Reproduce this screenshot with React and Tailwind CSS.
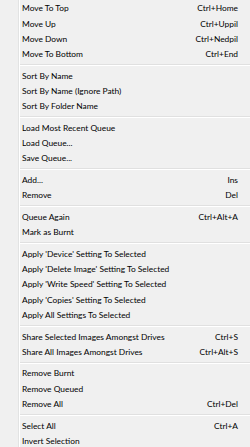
const groups = [
  [
    ['Move To Top', 'Ctrl+Home'],
    ['Move Up', 'Ctrl+Uppil'],
    ['Move Down', 'Ctrl+Nedpil'],
    ['Move To Bottom', 'Ctrl+End'],
  ],
  [
    ['Sort By Name'],
    ['Sort By Name (Ignore Path)'],
    ['Sort By Folder Name'],
  ],
  [
    ['Load Most Recent Queue'],
    ['Load Queue...'],
    ['Save Queue...'],
  ],
  [
    ['Add...', 'Ins'],
    ['Remove', 'Del'],
  ],
  [
    ['Queue Again', 'Ctrl+Alt+A'],
    ['Mark as Burnt'],
  ],
  [
    ["Apply 'Device' Setting To Selected"],
    ["Apply 'Delete Image' Setting To Selected"],
    ["Apply 'Write Speed' Setting To Selected"],
    ["Apply 'Copies' Setting To Selected"],
    ['Apply All Settings To Selected'],
  ],
  [
    ['Share Selected Images Amongst Drives', 'Ctrl+S'],
    ['Share All Images Amongst Drives', 'Ctrl+Alt+S'],
  ],
  [
    ['Remove Burnt'],
    ['Remove Queued'],
    ['Remove All', 'Ctrl+Del'],
  ],
  [
    ['Select All', 'Ctrl+A'],
    ['Invert Selection'],
  ],
];

function Item({ label, shortcut }) {
  return (
    <div className="flex h-[15.25px] items-center justify-between pl-[2px] pr-[12px]">
      <span>{label}</span>
      {shortcut && <span>{shortcut}</span>}
    </div>
  );
}

function Separator() {
  return (
    <div className="flex h-[6.4px] flex-col justify-center">
      <div className="h-px bg-[#e0e0e0]" />
      <div className="h-px bg-white" />
    </div>
  );
}

export default function App() {
  return (
    <div
      className="flex h-[447px] w-[250px] overflow-hidden bg-[#f0f0f0] text-[8.4px] leading-none text-black"
      style={{ fontFamily: 'Lato, "Noto Sans", sans-serif' }}
    >
      <div className="w-[19px] shrink-0 border-r border-[#e2e3e3]" />
      <div className="flex-1 border-l border-white pt-[1px]">
        {groups.map((items, gi) => (
          <div key={gi}>
            {gi > 0 && <Separator />}
            {items.map(([label, shortcut]) => (
              <Item key={label} label={label} shortcut={shortcut} />
            ))}
          </div>
        ))}
      </div>
    </div>
  );
}
